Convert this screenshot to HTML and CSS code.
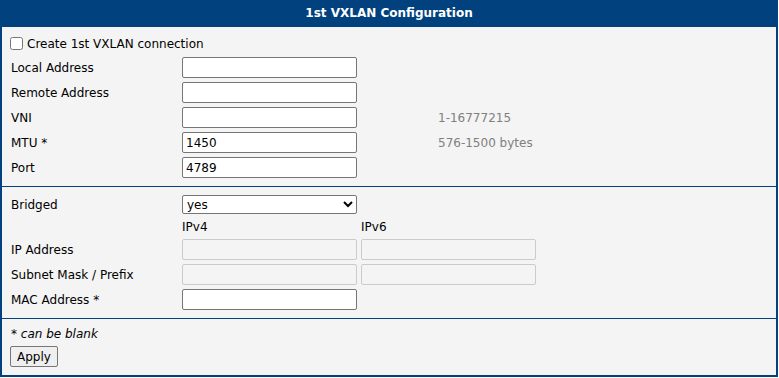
FILE: index.html
```html
<!DOCTYPE html>
<html>
<head>
<meta charset="utf-8">
<link rel="stylesheet" href="styles.css">
</head>
<body>
<div class="panel">
  <div class="title">1st VXLAN Configuration</div>
  <div class="section s1">
    <div class="grid g1">
      <label class="check"><input type="checkbox" class="cb"><span>Create 1st VXLAN connection</span></label>
      <span class="lbl">Local Address</span><input class="txt" type="text" value=""><span></span>
      <span class="lbl">Remote Address</span><input class="txt" type="text" value=""><span></span>
      <span class="lbl">VNI</span><input class="txt" type="text" value=""><span class="hint">1-16777215</span>
      <span class="lbl">MTU *</span><input class="txt" type="text" value="1450"><span class="hint">576-1500 bytes</span>
      <span class="lbl">Port</span><input class="txt" type="text" value="4789"><span></span>
    </div>
  </div>
  <div class="section s2">
    <div class="grid g2">
      <span class="lbl">Bridged</span><select class="sel"><option>yes</option><option>no</option></select><span></span>
      <span class="lbl"></span><span class="colh">IPv4</span><span class="colh">IPv6</span>
      <span class="lbl">IP Address</span><input class="txt" type="text" disabled><input class="txt" type="text" disabled>
      <span class="lbl">Subnet Mask / Prefix</span><input class="txt" type="text" disabled><input class="txt" type="text" disabled>
      <span class="lbl">MAC Address *</span><input class="txt" type="text" value=""><span></span>
    </div>
  </div>
  <div class="section foot">
    <div class="note">* can be blank</div>
    <button class="btn" type="button">Apply</button>
  </div>
</div>
</body>
</html>
```
FILE: styles.css
```css
html, body {
  margin: 0;
  padding: 0;
  background: #ffffff;
}
body {
  font-family: "DejaVu Sans", sans-serif;
  font-size: 12px;
  color: #000;
}
.panel {
  width: 774px;
  border: 2px solid #00417e;
  border-top: 0;
  background: #f4f4f4;
}
.title {
  height: 27px;
  line-height: 27px;
  background: #00417e;
  color: #fff;
  font-weight: bold;
  text-align: center;
  margin: 0 -2px;
}
.section {
  padding-left: 9px;
}
.s1 {
  padding-top: 3px;
  padding-bottom: 6px;
}
.s2 {
  border-top: 1px solid #00417e;
  padding-top: 5px;
  padding-bottom: 6px;
}
.foot {
  border-top: 1px solid #00417e;
  padding-top: 6px;
  padding-bottom: 8px;
}
.grid {
  display: grid;
  align-items: center;
}
.g1 {
  grid-template-columns: 171px 256px 1fr;
  grid-auto-rows: 25px;
}
.g2 {
  grid-template-columns: 171px 179px 175px;
  grid-template-rows: 25px 20px 25px 25px 25px;
}
.check {
  grid-column: 1 / -1;
  display: flex;
  align-items: center;
  padding-top: 2px;
}
.cb {
  width: 13px;
  height: 13px;
  margin: 0 4px 0 -1px;
}
.txt {
  box-sizing: border-box;
  width: 175px;
  height: 21px;
  margin: 0;
  padding: 0 3px;
  font: inherit;
  border: 1px solid #767676;
  border-radius: 2px;
  background: #fff;
  color: #000;
}
.txt:disabled {
  background: #f4f4f4;
  border-color: #cbcbcb;
}
.sel {
  box-sizing: border-box;
  width: 175px;
  height: 19px;
  margin: 0;
  font: inherit;
  border: 1px solid #767676;
  border-radius: 2px;
  background: #fff;
  color: #000;
}
.hint {
  color: #808080;
}
.colh {
  color: #000;
}
.note {
  font-style: italic;
  line-height: 18px;
}
.btn {
  margin: 3px 0 0 -1px;
  height: 21px;
  padding: 0 6px;
  font: inherit;
  color: #000;
  background: #efefef;
  border: 1px solid #767676;
  border-radius: 2px;
}
```
